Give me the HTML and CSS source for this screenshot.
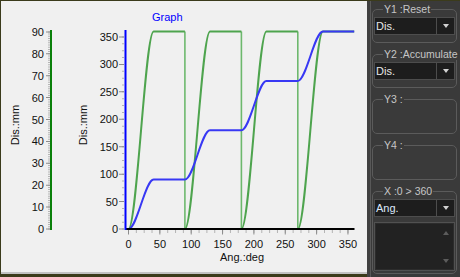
FILE: index.html
```html
<!DOCTYPE html>
<html lang="en">
<head>
    <meta charset="UTF-8">
    <meta name="viewport" content="width=device-width, initial-scale=1.0">
    <title>Graph</title>
    <link rel="stylesheet" href="styles.css">
</head>
<body>
    <div class="window">
        <!-- chart -->
        <div class="main">
            <div class="plot">
                <svg width="366" height="271" viewBox="1 1 366 271">
                    <!-- left axis Dis.:mm 0..90 -->
                    <text class="axis-title" transform="translate(19,125) rotate(-90)">Dis.:mm</text>
                    <line x1="49" y1="229.5" x2="49" y2="31" stroke="#b4b4b4" stroke-width="2" stroke-dasharray="1 1.19"/>
                    <line x1="48" y1="229.5" x2="48" y2="31" stroke="#8c8c8c" stroke-width="4" stroke-dasharray="1 20.9"/>
                    <line x1="51" y1="30" x2="51" y2="230" stroke="#0a800a" stroke-width="2"/>
                    <g class="tick-label" text-anchor="end">
                        <text x="44" y="233">0</text>
                        <text x="44" y="211.1">10</text>
                        <text x="44" y="189.2">20</text>
                        <text x="44" y="167.3">30</text>
                        <text x="44" y="145.4">40</text>
                        <text x="44" y="123.5">50</text>
                        <text x="44" y="101.6">60</text>
                        <text x="44" y="79.7">70</text>
                        <text x="44" y="57.8">80</text>
                        <text x="44" y="35.9">90</text>
                    </g>

                    <!-- main axis Dis.:mm 0..360 -->
                    <text class="axis-title" transform="translate(87,125) rotate(-90)">Dis.:mm</text>
                    <text class="graph-title" x="152" y="21">Graph</text>
                    <line x1="123" y1="229.5" x2="123" y2="31" stroke="#b4b4b4" stroke-width="2" stroke-dasharray="1 5.857"/>
                    <line x1="121.5" y1="229.5" x2="121.5" y2="31" stroke="#8c8c8c" stroke-width="5" stroke-dasharray="1 26.43"/>
                    <g class="tick-label" text-anchor="end">
                        <text x="118" y="233">0</text>
                        <text x="118" y="205.6">50</text>
                        <text x="118" y="178.1">100</text>
                        <text x="118" y="150.7">150</text>
                        <text x="118" y="123.3">200</text>
                        <text x="118" y="95.9">250</text>
                        <text x="118" y="68.4">300</text>
                        <text x="118" y="41">350</text>
                    </g>

                    <!-- x axis Ang.:deg 0..360 -->
                    <line x1="128" y1="231.5" x2="355" y2="231.5" stroke="#b4b4b4" stroke-width="3" stroke-dasharray="1 6.84"/>
                    <line x1="128" y1="232" x2="355" y2="232" stroke="#8c8c8c" stroke-width="5" stroke-dasharray="1 30.35"/>
                    <g class="tick-label" text-anchor="middle">
                        <text x="128.5" y="248">0</text>
                        <text x="159.9" y="248">50</text>
                        <text x="191.2" y="248">100</text>
                        <text x="222.6" y="248">150</text>
                        <text x="253.9" y="248">200</text>
                        <text x="285.3" y="248">250</text>
                        <text x="316.6" y="248">300</text>
                        <text x="348" y="248">350</text>
                    </g>
                    <text class="axis-title" x="220" y="260.5">Ang.:deg</text>

                    <!-- Y1 reset (green) -->
                    <g stroke="#6db86d" stroke-width="1.6">
                        <line x1="184.9" y1="31.5" x2="184.9" y2="229"/>
                        <line x1="241.4" y1="31.5" x2="241.4" y2="229"/>
                        <line x1="297.8" y1="31.5" x2="297.8" y2="229"/>
                    </g>
                    <path fill="none" stroke="#4ea44e" stroke-width="2" d="M128.5 229 C136.9 229 145.2 31.5 153.6 31.5 H184.9 M184.9 229 C193.3 229 201.6 31.5 210 31.5 H241.4 M241.4 229 C249.8 229 258.1 31.5 266.4 31.5 H297.8 M297.8 229 C306.2 229 314.5 31.5 322.9 31.5 H354.2"/>

                    <!-- Y2 accumulate (blue) -->
                    <path fill="none" stroke="#3838f4" stroke-width="2" d="M128.5 229 C136.9 229 145.2 179.6 153.6 179.6 L184.9 179.6 C193.3 179.6 201.6 130.3 210 130.3 L241.4 130.3 C249.8 130.3 258.1 80.9 266.4 80.9 L297.8 80.9 C306.2 80.9 314.5 31.5 322.9 31.5 L354.2 31.5"/>

                    <!-- axis lines -->
                    <line x1="125" y1="229" x2="354.5" y2="229" stroke="#000" stroke-width="2"/>
                    <line x1="125.5" y1="30" x2="125.5" y2="230" stroke="#0000ff" stroke-width="2"/>
                </svg>
            </div>
            <div class="hscroll"></div>
        </div>

        <!-- settings -->
        <div class="side">
            <fieldset class="group">
                <legend>Y1 :Reset</legend>
                <div class="combo"><span>Dis.</span><i class="drop"></i></div>
            </fieldset>
            <fieldset class="group">
                <legend>Y2 :Accumulate</legend>
                <div class="combo"><span>Dis.</span><i class="drop"></i></div>
            </fieldset>
            <fieldset class="group empty">
                <legend>Y3 :</legend>
            </fieldset>
            <fieldset class="group empty">
                <legend>Y4 :</legend>
            </fieldset>
            <fieldset class="group last">
                <legend>X :0 &gt; 360</legend>
                <div class="combo"><span class="ang">Ang.</span><i class="drop"></i></div>
                <div class="list">
                    <div class="list-bar"><i class="up"></i><i class="down"></i></div>
                </div>
            </fieldset>
        </div>
    </div>
</body>
</html>
```

FILE: styles.css
```css
body {
    margin: 0;
    background: #3b3b1b;
    font-family: "Liberation Sans", Arial, sans-serif;
}

.window {
    display: flex;
    width: 460px;
    height: 277px;
    padding: 1px 0 0 1px;
    box-sizing: border-box;
    background: #3b3b1b;
}

/* chart */
.main {
    width: 366px;
    display: flex;
    flex-direction: column;
}

.plot {
    height: 271px;
    background: #f0f0f0;
}

.plot svg { display: block; }

.tick-label {
    font-size: 11px;
    fill: #111;
}

.axis-title {
    font-size: 11px;
    fill: #111;
    text-anchor: middle;
}

text.axis-title[x] { text-anchor: start; }

.graph-title {
    font-size: 11px;
    fill: #0000ff;
}

.hscroll {
    height: 2px;
    background: #c2c2c2;
}

/* settings panel */
.side {
    flex: 1;
    min-width: 0;
    background: #3a3a3a;
    border-left: 3px solid #404040;
    box-shadow: inset 1px 0 #585858;
    padding: 2px 3px 0 2px;
}

.group {
    margin: 0 0 5px;
    padding: 0 1px 7px;
    min-width: 0;
    border: 1px solid #5b5b5b;
    border-radius: 5px;
}

.group legend {
    margin-left: 9px;
    padding: 0 1px;
    font-size: 10.5px;
    line-height: 12px;
    white-space: nowrap;
    color: #c6c6c6;
}

.group.empty { padding-bottom: 28px; }
.group.last { padding-bottom: 2px; }

.combo {
    display: flex;
    height: 18px;
    margin-top: 2px;
    box-sizing: border-box;
    border: 1px solid #4d4d4d;
    background: #1d1d1d;
}

.combo span {
    flex: 1;
    padding-left: 1px;
    font-size: 11px;
    line-height: 16px;
    color: #e8e8e8;
}

.combo span.ang { color: #dce8fa; }

.drop {
    width: 17px;
    display: flex;
    align-items: center;
    justify-content: center;
    border-left: 1px solid #4d4d4d;
}

.drop::after {
    content: "";
    border-left: 3.5px solid transparent;
    border-right: 3.5px solid transparent;
    border-top: 4px solid #d2d2d2;
}

.list {
    display: flex;
    justify-content: flex-end;
    height: 49px;
    margin-top: 5px;
    box-sizing: border-box;
    border: 1px solid #515151;
    background: #222;
    box-shadow: inset 0 0 0 1px #2c2c2c;
}

.list-bar {
    width: 17px;
    display: flex;
    flex-direction: column;
    justify-content: space-between;
    align-items: center;
    padding: 8px 0 7px;
}

.list-bar .up {
    border-left: 3.5px solid transparent;
    border-right: 3.5px solid transparent;
    border-bottom: 4px solid #5c5c5c;
}

.list-bar .down {
    border-left: 3.5px solid transparent;
    border-right: 3.5px solid transparent;
    border-top: 4px solid #5c5c5c;
}
```
